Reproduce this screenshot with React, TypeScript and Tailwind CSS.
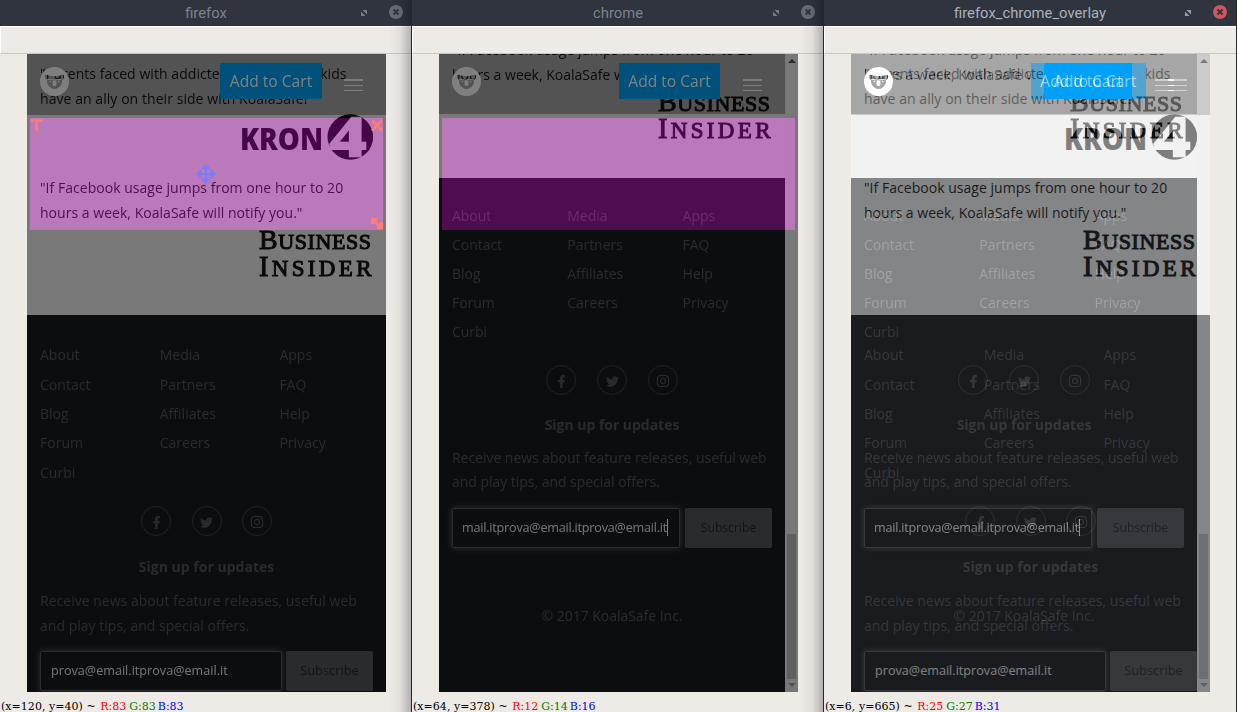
import React from "react";
import { FaFacebookF, FaInstagram, FaTwitter } from "react-icons/fa";

type Browser = "firefox" | "chrome";

const NAV = [
  ["About", "Media", "Apps"],
  ["Contact", "Partners", "FAQ"],
  ["Blog", "Affiliates", "Help"],
  ["Forum", "Careers", "Privacy"],
  ["Curbi", "", ""],
];

function Koala() {
  return (
    <svg className="block h-[29px] w-[29px]" viewBox="0 0 29 29">
      <path
        fill="#fff"
        fillRule="evenodd"
        d="M14.5 0a14.5 14.5 0 1 0 0 29a14.5 14.5 0 1 0 0-29zM5 8.5Q6 7 9 8.500Q14.500 10 20 8.500Q23 7 24 8.500Q24.500 11.500 22 13Q22.500 18 18.500 20.500Q14.500 23.500 10.500 20.500Q6.500 18 7 13Q4.500 11.500 5 8.500z"
      />
      <ellipse cx="14.500" cy="16.300" rx="2" ry="3" fill="#fff" />
      <circle cx="10.300" cy="14.500" r="0.800" fill="#fff" />
      <circle cx="18.700" cy="14.500" r="0.800" fill="#fff" />
      <path d="M7 12.300Q14.500 13.500 22 12.300" stroke="#fff" strokeWidth="0.800" fill="none" />
    </svg>
  );
}

function KronLogo() {
  return (
    <svg className="ml-auto mr-[12px] block h-[46px] w-[134px]" viewBox="0 0 134 46">
      <text
        x="0"
        y="35.500"
        textLength="83"
        lengthAdjust="spacingAndGlyphs"
        fontFamily="Open Sans, sans-serif"
        fontWeight="800"
        fontSize="29.500"
        fill="#0a0a0a"
      >
        KRON
      </text>
      <circle cx="110.300" cy="23" r="22.800" fill="#0a0a0a" />
      <text
        x="90"
        y="42"
        textLength="36"
        lengthAdjust="spacingAndGlyphs"
        fontFamily="Liberation Serif, serif"
        fontWeight="700"
        fontSize="56"
        fill="#f2f2f2"
        stroke="#f2f2f2"
        strokeWidth="2.500"
      >
        4
      </text>
    </svg>
  );
}

function InsiderLogo() {
  return (
    <svg
      className="ml-auto mr-[12px] block h-[50px] w-[117px]"
      viewBox="0 0 117 50"
      fontFamily="Liberation Serif, serif"
      fill="#101010"
      stroke="#101010"
      strokeWidth="1"
    >
      <text x="2" y="20.500" textLength="112" fontSize="22">
        <tspan fontSize="28">B</tspan>USINESS
      </text>
      <text x="2" y="48" textLength="112.500" fontSize="23">
        <tspan fontSize="28.500">I</tspan>NSIDER
      </text>
    </svg>
  );
}

function Header({ browser }: { browser: Browser }) {
  const ff = browser === "firefox";
  return (
    <div
      className={
        "absolute left-0 top-0 flex w-full items-start bg-[#000000]/[0.314] pl-[13px] pr-[23px] " +
        (ff ? "h-[61px]" : "h-[60px]")
      }
    >
      <div className="mt-[13px]">
        <Koala />
      </div>
      <div
        className={
          "ml-auto mt-[9px] flex h-9 items-center justify-center bg-[#00a0f8] pt-px text-[15.6px] text-white " +
          (ff ? "mr-[22px] w-[102px] rounded-[2px]" : "mr-[23px] w-[101px]")
        }
      >
        Add to Cart
      </div>
      <div className="mt-[25px] flex w-[19px] flex-col">
        <div className="h-[2px] bg-white/90" />
        <div className="mt-[4px] h-px bg-white" />
        <div className="mt-[4px] h-px bg-white" />
      </div>
    </div>
  );
}

function Footer({ browser }: { browser: Browser }) {
  const ff = browser === "firefox";
  return (
    <div
      className={
        "flex flex-1 flex-col bg-[#191b1f] pl-[13px] text-[14px] text-[#525457] " +
        (ff ? "pt-[25px] leading-[25px] tracking-[0.02px]" : "pt-[24px] leading-[24px] tracking-[-0.03px]")
      }
    >
      {NAV.map((row) => (
        <div key={row[0]} className={"flex shrink-0 items-center " + (ff ? "h-[29.4px]" : "h-[28.8px]")}>
          {row.map((label, i) => (
            <div key={i} className={"shrink-0 " + (ff ? "w-[119.7px]" : "w-[115.3px]")}>
              {label}
            </div>
          ))}
        </div>
      ))}
      <div className={"flex justify-center pr-[13px] " + (ff ? "mt-[19px] gap-[20.5px]" : "mt-[19px] gap-[21px]")}>
        {[FaFacebookF, FaTwitter, FaInstagram].map((Icon, i) => (
          <div
            key={i}
            className="flex h-[30px] w-[30px] items-center justify-center rounded-full border border-[#434548] pt-[3px]"
          >
            <Icon size={i === 2 ? 14 : 13} color="#515356" />
          </div>
        ))}
      </div>
      <div className="mt-[18px] pr-[13px] text-center font-bold">Sign up for updates</div>
      <div className="mt-[9px] whitespace-pre">{"Receive news about feature releases, useful web\nand play tips, and special offers."}</div>
      <div className={"flex shrink-0 " + (ff ? "mt-[13px] gap-[4px]" : "mt-[14px] gap-[5px]")}>
        <div
          className={
            "flex h-10 items-center overflow-hidden whitespace-nowrap rounded-[2px] border border-[#56585c] text-[12.6px] text-white/90 shadow-[0_0_6px_rgba(255,255,255,0.3)] " +
            (ff ? "w-[242px] pl-[10px]" : "w-[228px] pl-[9px]")
          }
        >
          {ff ? (
            "prova@email.itprova@email.it"
          ) : (
            <>
              <span className="tracking-[-0.2px]">mail.itprova@email.itprova@email.it</span>
              <span className="h-[17px] w-px bg-white" />
            </>
          )}
        </div>
        <div
          className={
            "flex h-10 w-[87px] items-center justify-center rounded-[2px] bg-[#54565b] text-[#25272a] " +
            (ff ? "text-[12.8px]" : "text-[12.2px]")
          }
        >
          Subscribe
        </div>
      </div>
      {!ff && <div className="mt-[56px] pr-[13px] text-center">© 2017 KoalaSafe Inc.</div>}
    </div>
  );
}

const QUOTE = '"If Facebook usage jumps from one hour to 20\nhours a week, KoalaSafe will notify you."';

function FirefoxPage() {
  return (
    <div className="relative flex h-[638px] w-[359px] flex-col overflow-hidden bg-[#f2f2f2] font-['Open_Sans',sans-serif] text-[14px] leading-[25px] text-[#1a1c20]">
      <div className="mt-[7px] whitespace-pre pl-[13px] tracking-[0.06px]">
        {'"Parents faced with addicted, cyberbullied kids\nhave an ally on their side with KoalaSafe!'}
      </div>
      <div className="mt-[3px]">
        <KronLogo />
      </div>
      <div className="mt-[15px] whitespace-pre pl-[13px] tracking-[0.03px]">{QUOTE}</div>
      <div className="mb-[37px] mt-[3px]">
        <InsiderLogo />
      </div>
      <Footer browser="firefox" />
      <Header browser="firefox" />
    </div>
  );
}

function ChromePage() {
  return (
    <div className="flex h-[638px] w-[359px] overflow-hidden font-['Open_Sans',sans-serif]">
      <div className="relative flex w-[346px] flex-col overflow-hidden bg-[#f2f2f2]">
        <div className="-mt-[17px] whitespace-pre pl-[13px] text-[14px] leading-[25px] text-[#1a1c20]">{QUOTE}</div>
        <div className="mb-[38px] mt-[3px]">
          <InsiderLogo />
        </div>
        <Footer browser="chrome" />
        <Header browser="chrome" />
      </div>
      <div className="flex w-[13px] flex-col items-center bg-[#f1f1f1]">
        <svg className="mt-[5px] h-[4px] w-[8px]" viewBox="0 0 8 4">
          <path d="M0 4L4 0L8 4z" fill="#505050" />
        </svg>
        <div className="mt-[471px] h-[145px] w-[9px] bg-[#c1c1c1]" />
        <svg className="mt-[4px] h-[4px] w-[8px]" viewBox="0 0 8 4">
          <path d="M0 0L4 4L8 0z" fill="#a3a3a3" />
        </svg>
      </div>
    </div>
  );
}

function Markers() {
  return (
    <svg className="block h-[112px] w-[353px]" viewBox="0 0 353 112" fill="none">
      <path d="M0.500 2.500h12M6.500 2v11" stroke="#ff7b74" strokeWidth="2.500" />
      <path d="M342 2.500l10 10M352 2.500l-10 10" stroke="#ff7b74" strokeWidth="3" />
      <path d="M343.500 102.500l7 7" stroke="#ff7b74" strokeWidth="3" />
      <path d="M341 100h6v3l-3 3h-3zM353 111h-6v-3l3-4h3z" fill="#ff7b74" />
      <path d="M176 49v14M168.500 56h15" stroke="#7b7bff" strokeWidth="2" />
      <path
        d="M176 46l4 4v1.500h-8V50zM176 66l4-4v-1.500h-8V62zM166 56l4-4h1.500v8H170zM186 56l-4-4h-1.500v8H182z"
        fill="#7b7bff"
      />
    </svg>
  );
}

function Window({
  title,
  active,
  coords,
  rgb,
  children,
}: {
  title: string;
  active?: boolean;
  coords: string;
  rgb: [number, number, number];
  children: React.ReactNode;
}) {
  return (
    <div className={"relative flex h-[712px] flex-col overflow-hidden bg-[#eeebe7] " + (active ? "w-[413px]" : "w-[412px]")}>
      <div
        className={
          "flex h-[26px] shrink-0 items-center bg-[#2f343f] font-['Roboto',sans-serif] " +
          (active ? "pr-[10px]" : "pr-[9px]")
        }
      >
        <div
          className={
            "w-full pl-[51px] text-center text-[14.8px] leading-[26px] " + (active ? "text-[#a9b1bd]" : "text-[#7c818c]")
          }
        >
          {title}
        </div>
        <svg className="mr-[22px] h-[6px] w-[6px] shrink-0" viewBox="0 0 6 6">
          <path d="M1.500 0H6V4.500zM0 1.500L4.500 6H0z" fill={active ? "#9ba1ac" : "#767b87"} />
        </svg>
        <svg className="mb-[2px] h-[14px] w-[14px] shrink-0" viewBox="0 0 14 14">
          <circle cx="7" cy="7" r="7" fill={active ? "#cc575d" : "#686c76"} />
          <path d="M4.500 4.500l5 5M9.500 4.500l-5 5" stroke="#2f343f" strokeWidth="1.800" />
        </svg>
      </div>
      <div className="h-[28px] shrink-0 border-b border-l border-t border-b-[#c9c6c2] border-l-white border-t-white" />
      <div className="relative ml-[27px] h-[638px] w-[359px] shrink-0">{children}</div>
      <div className="ml-[1px] h-[20px] shrink-0 whitespace-pre font-['DejaVu_Serif',serif] text-[11px] leading-[29px] text-black">
        <span className="tracking-[0.04px]">{coords} ~ </span>
        <span className="ml-px text-[#ff0000]">R:{rgb[0]}</span>
        <span className="ml-[3px] text-[#008000]">G:{rgb[1]}</span>
        <span className="ml-[2px] text-[#0000ff]">B:{rgb[2]}</span>
      </div>
      {!active && (
        <div className="absolute right-px top-0 h-full w-[22px] bg-gradient-to-r from-black/0 via-black/5 to-black/25" />
      )}
      <div className="absolute right-0 top-0 h-full w-px bg-[#26282e]" />
    </div>
  );
}

const SELECTION =
  "absolute left-[3px] top-[64px] h-[112px] w-[353px] bg-[#410041] mix-blend-plus-lighter";

export default function App() {
  return (
    <div className="flex h-[712px] w-[1237px] overflow-hidden">
      <Window title="firefox" coords="(x=120, y=40)" rgb={[83, 83, 83]}>
        <div className="relative isolate">
          <FirefoxPage />
          <div className="absolute inset-0 bg-black/50" />
          <div className={SELECTION} />
          <div className="absolute left-[3px] top-[64px]">
            <Markers />
          </div>
        </div>
      </Window>
      <Window title="chrome" coords="(x=64, y=378)" rgb={[12, 14, 16]}>
        <div className="relative isolate">
          <ChromePage />
          <div className="absolute inset-0 bg-black/50" />
          <div className={SELECTION} />
        </div>
      </Window>
      <Window title="firefox_chrome_overlay" active coords="(x=6, y=665)" rgb={[25, 27, 31]}>
        <FirefoxPage />
        <div className="absolute inset-0 opacity-50">
          <ChromePage />
        </div>
      </Window>
    </div>
  );
}
